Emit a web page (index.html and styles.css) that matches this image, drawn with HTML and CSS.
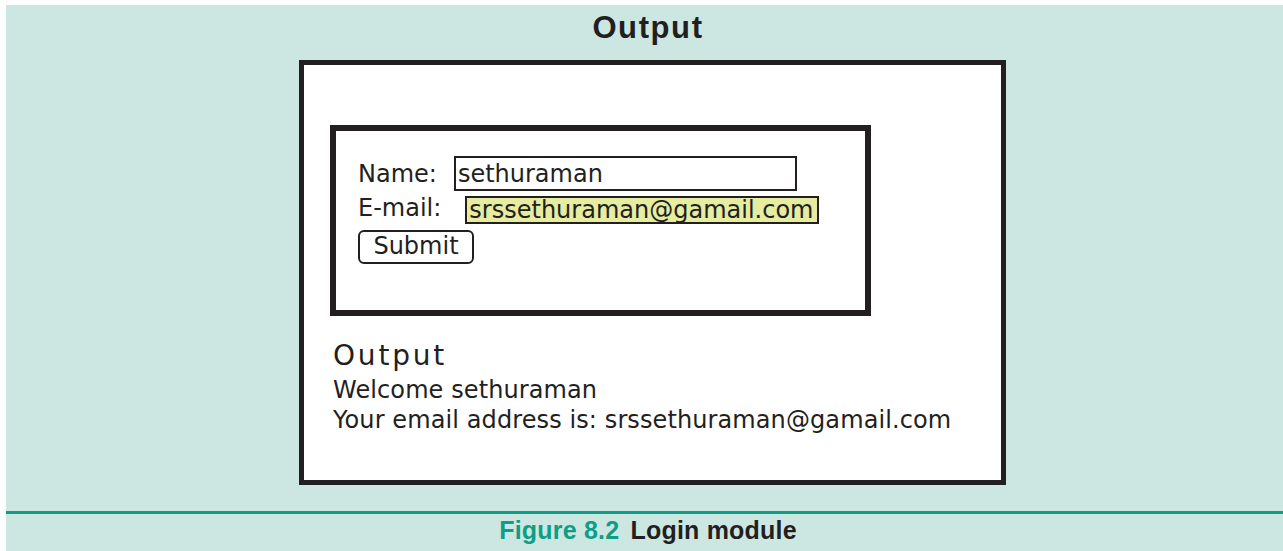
FILE: index.html
```html
<!DOCTYPE html>
<html lang="en">
  <head>
    <meta charset="UTF-8" />
    <meta name="viewport" content="width=device-width, initial-scale=1.0" />
    <title>Login module</title>
    <link rel="stylesheet" href="styles.css">
  </head>
  <body>
    <div class="figure">
      <h2 class="figure-title">Output</h2>
      <div class="browser">
        <form class="login" method="POST">
          <div class="row">
            <label for="name">Name:</label>
            <input class="field name-field" id="name" type="text" name="name" value="sethuraman" />
          </div>
          <div class="row row-email">
            <label for="email">E-mail:</label>
            <input class="field email-field" id="email" type="email" name="email" value="srssethuraman@gamail.com" />
          </div>
          <button type="submit">Submit</button>
        </form>

        <div class="result">
          <h3>Output</h3>
          <p>Welcome sethuraman</p>
          <p>Your email address is: srssethuraman@gamail.com</p>
        </div>
      </div>
      <div class="rule"></div>
      <div class="caption"><span class="fig-no">Figure 8.2</span> Login module</div>
    </div>
  </body>
</html>
```

FILE: styles.css
```css
*,
*::before,
*::after {
  box-sizing: border-box;
}

body {
  margin: 0;
  background: #fff;
  overflow: hidden;
}

.figure {
  margin: 5px 0 0 6px;
  height: 546px;
  background-color: #cce7e2;
  color: #231f20;
}

.figure-title {
  margin: 0 0 15px;
  padding: 6px 0 0 7px;
  font-family: 'Liberation Sans', Arial, sans-serif;
  font-size: 31px;
  line-height: 34px;
  letter-spacing: 1.6px;
  text-align: center;
}

.browser {
  margin-left: 293px;
  width: 707px;
  height: 425px;
  padding: 60px 0 0 26px;
  border: 5px solid #231f20;
  background: #fff;
  font-family: 'DejaVu Sans', Verdana, sans-serif;
  font-size: 24px;
}

.login {
  width: 541px;
  height: 191px;
  padding: 25px 0 0 22px;
  border: 6px solid #231f20;
}

.row {
  display: flex;
  align-items: center;
}
.row-email {
  align-items: flex-start;
  margin-top: 5px;
}
.row-email label {
  line-height: 24px;
}

.field {
  padding: 0 2px;
  border: 2px solid #231f20;
  font-family: inherit;
  font-size: 24px;
  color: #231f20;
  outline: none;
}
.name-field {
  margin-left: 17px;
  width: 343px;
  height: 35px;
  background: #fff;
}
.email-field {
  margin-left: 24px;
  width: 354px;
  height: 28px;
  background: #e6eca0;
}

button {
  margin-top: 6px;
  width: 116px;
  height: 34px;
  padding: 0 0 2px;
  border: 2px solid #231f20;
  border-radius: 6px;
  background: #fff;
  font-family: inherit;
  font-size: 24px;
  color: #231f20;
}

.result {
  padding-left: 3px;
}
.result h3 {
  margin: 23px 0 2px;
  font-size: 28px;
  font-weight: normal;
  line-height: 34px;
  letter-spacing: 2.8px;
}
.result p {
  margin: 0;
  line-height: 30px;
  letter-spacing: 0.1px;
}

.rule {
  margin-top: 26px;
  height: 3px;
  background-color: #0e9e85;
}

.caption {
  padding: 1px 0 0 7px;
  font-family: 'Liberation Sans', Arial, sans-serif;
  font-size: 25px;
  font-weight: bold;
  line-height: 30px;
  letter-spacing: 0.2px;
  text-align: center;
}
.fig-no {
  color: #0e9e85;
  margin-right: 4px;
}
```
